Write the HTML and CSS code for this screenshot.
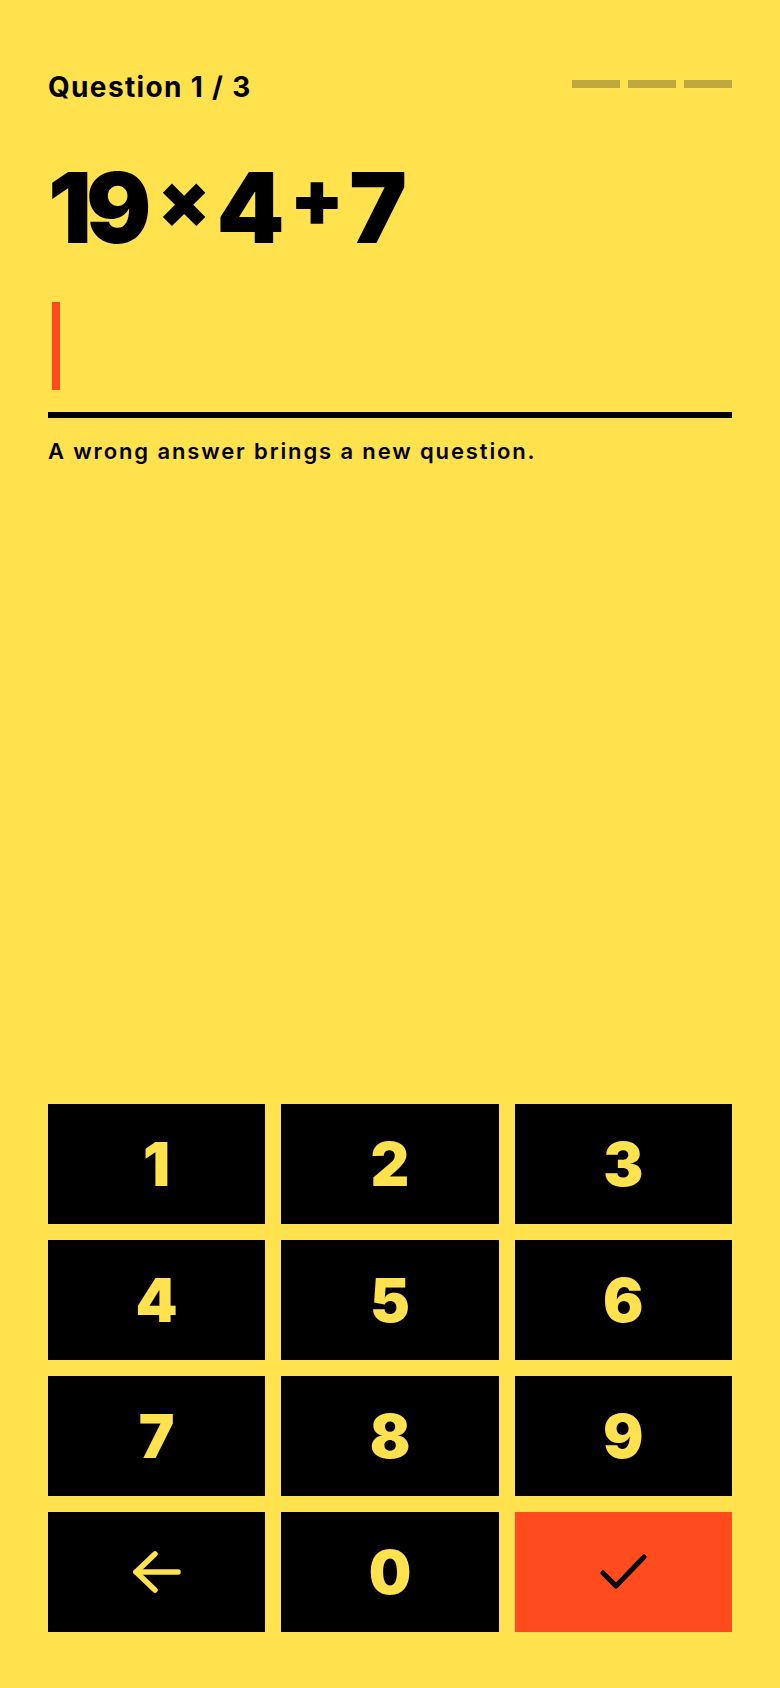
FILE: index.html
```html
<!DOCTYPE html>
<html lang="en">
<head>
<meta charset="utf-8">
<title>Question 1 / 3</title>
<link rel="stylesheet" href="styles.css">
</head>
<body>
<main class="screen">
  <header class="top">
    <div class="counter">Question 1 / 3</div>
    <div class="progress">
      <span class="dash"></span>
      <span class="dash"></span>
      <span class="dash"></span>
    </div>
  </header>

  <div class="equation"><span class="num tight">19</span><span class="op times">×</span><span class="num">4</span><span class="op plus">+</span><span class="num">7</span></div>

  <div class="answer"><span class="caret"></span></div>

  <p class="hint">A wrong answer brings a new question.</p>

  <div class="spacer"></div>

  <div class="keypad">
    <button class="key">1</button>
    <button class="key">2</button>
    <button class="key">3</button>
    <button class="key">4</button>
    <button class="key">5</button>
    <button class="key">6</button>
    <button class="key">7</button>
    <button class="key">8</button>
    <button class="key">9</button>
    <button class="key" aria-label="Delete">
      <svg class="icon" width="48" height="42" viewBox="0 0 48 42" fill="none" stroke="currentColor" stroke-width="5.5" stroke-linecap="round" stroke-linejoin="round">
        <path d="M3 21 H45"/>
        <path d="M22 3 L3 21 L22 39"/>
      </svg>
    </button>
    <button class="key">0</button>
    <button class="key key-submit" aria-label="Submit">
      <svg class="icon" width="48" height="36" viewBox="0 0 48 36" fill="none" stroke="currentColor" stroke-width="5" stroke-linecap="round" stroke-linejoin="round">
        <path d="M4 19 L17 32 L45 3"/>
      </svg>
    </button>
  </div>
</main>
</body>
</html>
```

FILE: styles.css
```css
* { box-sizing: border-box; }

html, body {
  margin: 0;
  padding: 0;
  background: #FFE24E;
}

body {
  font-family: Inter, "Noto Sans", "Liberation Sans", sans-serif;
  color: #000;
}

.screen {
  display: flex;
  flex-direction: column;
  min-height: 1688px;
  padding: 69px 48px 56px;
}

.top {
  display: flex;
  justify-content: space-between;
  align-items: center;
  height: 36px;
}

.counter {
  font-size: 28px;
  line-height: 36px;
  font-weight: 700;
  letter-spacing: 0.048em;
}

.progress {
  display: flex;
  gap: 8px;
  margin-top: -6px;
}

.dash {
  display: block;
  width: 48px;
  height: 8px;
  background: #BFA83E;
}

.equation {
  margin-top: 53px;
  height: 98px;
  font-size: 97px;
  line-height: 98px;
  font-weight: 900;
  white-space: nowrap;
}

.num {
  letter-spacing: -0.02em;
}

.num.tight {
  letter-spacing: -0.06em;
}

.op {
  display: inline-block;
  line-height: 1;
}

.times {
  font-size: 76px;
  vertical-align: 16px;
  margin: 0 6px 0 12px;
}

.plus {
  font-size: 79px;
  vertical-align: 17px;
  margin: 0 5px 0 7px;
}

.answer {
  margin-top: 46px;
  padding-bottom: 22px;
  border-bottom: 6px solid #000;
  height: 116px;
}

.caret {
  display: block;
  width: 8px;
  height: 88px;
  margin-left: 4px;
  background: #FF4B1E;
}

.hint {
  margin: 19px 0 0;
  font-size: 22px;
  line-height: 28px;
  font-weight: 600;
  letter-spacing: 0.085em;
}

.spacer {
  flex: 1;
}

.keypad {
  display: grid;
  grid-template-columns: repeat(3, 1fr);
  grid-auto-rows: 120px;
  gap: 16px;
}

.key {
  display: flex;
  align-items: center;
  justify-content: center;
  border: 0;
  margin: 0;
  padding: 0;
  background: #000;
  color: #FFE24E;
  font-family: Inter, "Noto Sans", "Liberation Sans", sans-serif;
  font-size: 60px;
  font-weight: 900;
  line-height: 1;
}

.key-submit {
  background: #FF4B1E;
  color: #000;
}

.icon {
  display: block;
}
```
